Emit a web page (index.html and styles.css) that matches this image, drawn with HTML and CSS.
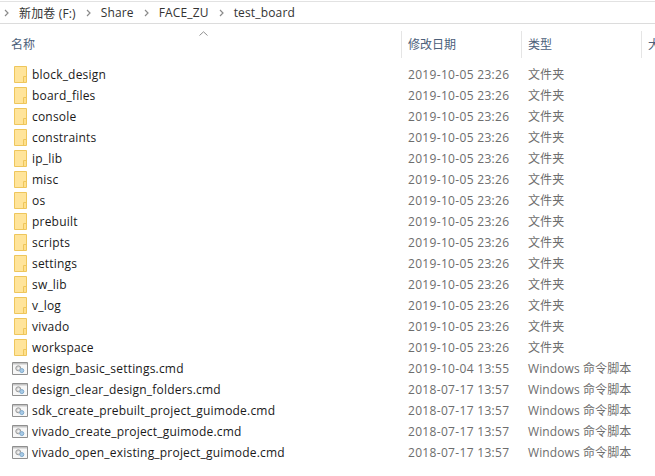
FILE: index.html
```html
<!DOCTYPE html>
<html lang="zh">
<head>
<meta charset="utf-8">
<title>test_board</title>
<link rel="stylesheet" href="styles.css">
</head>
<body>
<svg class="defs" width="0" height="0" aria-hidden="true">
  <symbol id="folder" viewBox="0 0 13 17">
    <path d="M.5.5H12.5V16.5H.5Z" fill="#ffe08c" stroke="#eec65c"/>
    <path d="M1 1H12V10H10V16H1Z" fill="#ffe49a"/>
    <path d="M9.5 16V10.5H12.5" fill="none" stroke="#eec65c"/>
  </symbol>
  <symbol id="script" viewBox="0 0 16 13">
    <path d="M.5.5H15.5V12.5H.5Z" fill="#f7f7f7" stroke="#8f8f8f"/>
    <path d="M1 1H15V2.5H1Z" fill="#c4c4c4"/>
    <circle cx="6.3" cy="6.3" r="2.5" fill="#d8d8d8" stroke="#9a9a9a"/>
    <circle cx="6.3" cy="6.3" r=".8" fill="#fff"/>
    <circle cx="9.8" cy="8.6" r="2" fill="#a9cbe6" stroke="#7fa9cc"/>
  </symbol>
</svg>
<nav class="crumbs">
  <svg class="chev first" viewBox="0 0 5 8"><path d="M1 1L4 4L1 7"/></svg>
  <span>新加卷 (F:)</span>
  <svg class="chev" viewBox="0 0 5 8"><path d="M1 1L4 4L1 7"/></svg>
  <span>Share</span>
  <svg class="chev" viewBox="0 0 5 8"><path d="M1 1L4 4L1 7"/></svg>
  <span>FACE_ZU</span>
  <svg class="chev" viewBox="0 0 5 8"><path d="M1 1L4 4L1 7"/></svg>
  <span>test_board</span>
</nav>
<header class="head">
  <div class="hcol hname">名称
    <svg class="sort" viewBox="0 0 9 5"><path d="M.5 4.5L4.5 .8L8.5 4.5"/></svg>
  </div>
  <div class="hcol hdate">修改日期</div>
  <div class="hcol htype">类型</div>
  <div class="hcol hsize">大小</div>
</header>
<main class="list">
  <div class="row"><svg class="ico"><use href="#folder"/></svg><span class="name">block_design</span><span class="date">2019-10-05 23:26</span><span class="type">文件夹</span></div>
  <div class="row"><svg class="ico"><use href="#folder"/></svg><span class="name">board_files</span><span class="date">2019-10-05 23:26</span><span class="type">文件夹</span></div>
  <div class="row"><svg class="ico"><use href="#folder"/></svg><span class="name">console</span><span class="date">2019-10-05 23:26</span><span class="type">文件夹</span></div>
  <div class="row"><svg class="ico"><use href="#folder"/></svg><span class="name">constraints</span><span class="date">2019-10-05 23:26</span><span class="type">文件夹</span></div>
  <div class="row"><svg class="ico"><use href="#folder"/></svg><span class="name">ip_lib</span><span class="date">2019-10-05 23:26</span><span class="type">文件夹</span></div>
  <div class="row"><svg class="ico"><use href="#folder"/></svg><span class="name">misc</span><span class="date">2019-10-05 23:26</span><span class="type">文件夹</span></div>
  <div class="row"><svg class="ico"><use href="#folder"/></svg><span class="name">os</span><span class="date">2019-10-05 23:26</span><span class="type">文件夹</span></div>
  <div class="row"><svg class="ico"><use href="#folder"/></svg><span class="name">prebuilt</span><span class="date">2019-10-05 23:26</span><span class="type">文件夹</span></div>
  <div class="row"><svg class="ico"><use href="#folder"/></svg><span class="name">scripts</span><span class="date">2019-10-05 23:26</span><span class="type">文件夹</span></div>
  <div class="row"><svg class="ico"><use href="#folder"/></svg><span class="name">settings</span><span class="date">2019-10-05 23:26</span><span class="type">文件夹</span></div>
  <div class="row"><svg class="ico"><use href="#folder"/></svg><span class="name">sw_lib</span><span class="date">2019-10-05 23:26</span><span class="type">文件夹</span></div>
  <div class="row"><svg class="ico"><use href="#folder"/></svg><span class="name">v_log</span><span class="date">2019-10-05 23:26</span><span class="type">文件夹</span></div>
  <div class="row"><svg class="ico"><use href="#folder"/></svg><span class="name">vivado</span><span class="date">2019-10-05 23:26</span><span class="type">文件夹</span></div>
  <div class="row"><svg class="ico"><use href="#folder"/></svg><span class="name">workspace</span><span class="date">2019-10-05 23:26</span><span class="type">文件夹</span></div>
  <div class="row"><svg class="ico file"><use href="#script"/></svg><span class="name">design_basic_settings.cmd</span><span class="date">2019-10-04 13:55</span><span class="type">Windows 命令脚本</span></div>
  <div class="row"><svg class="ico file"><use href="#script"/></svg><span class="name">design_clear_design_folders.cmd</span><span class="date">2018-07-17 13:57</span><span class="type">Windows 命令脚本</span></div>
  <div class="row"><svg class="ico file"><use href="#script"/></svg><span class="name">sdk_create_prebuilt_project_guimode.cmd</span><span class="date">2018-07-17 13:57</span><span class="type">Windows 命令脚本</span></div>
  <div class="row"><svg class="ico file"><use href="#script"/></svg><span class="name">vivado_create_project_guimode.cmd</span><span class="date">2018-07-17 13:57</span><span class="type">Windows 命令脚本</span></div>
  <div class="row"><svg class="ico file"><use href="#script"/></svg><span class="name">vivado_open_existing_project_guimode.cmd</span><span class="date">2018-07-17 13:57</span><span class="type">Windows 命令脚本</span></div>
</main>
</body>
</html>
```
FILE: styles.css
```css
html, body {
  margin: 0;
  padding: 0;
  background: #fff;
  overflow: hidden;
}
body {
  width: 655px;
  height: 476px;
  font-family: "Open Sans", "Noto Sans CJK SC", sans-serif;
  font-size: 12px;
  color: #1a1a1a;
}
.defs {
  position: absolute;
}
.crumbs {
  box-sizing: border-box;
  height: 23px;
  margin-top: 1px;
  border-top: 1px solid #e2e2e2;
  border-bottom: 1px solid #dcdcdc;
  display: flex;
  align-items: center;
  padding-left: 4px;
  color: #333;
  letter-spacing: .15px;
}
.chev {
  width: 5px;
  height: 8px;
  margin: 0 10px 0 0;
  flex: none;
}
.chev path {
  fill: none;
  stroke: #8a8a8a;
  stroke-width: 1.2;
}
.chev.first {
  margin-right: 10px;
}
.crumbs span {
  margin-right: 10px;
}
.head {
  display: flex;
  height: 27px;
  margin-top: 7px;
  color: #4c607a;
}
.hcol {
  box-sizing: border-box;
  padding-left: 6px;
  line-height: 27px;
  border-left: 1px solid #e5e5e5;
  flex: none;
  overflow: hidden;
  white-space: nowrap;
}
.hname {
  width: 401px;
  border-left: 0;
  padding-left: 11px;
  position: relative;
}
.hdate, .htype {
  width: 120px;
}
.hsize {
  width: 14px;
}
.sort {
  position: absolute;
  left: 199px;
  top: 0;
  width: 9px;
  height: 5px;
}
.sort path {
  fill: none;
  stroke: #8f8f8f;
}
.list {
  margin-top: 6px;
}
.row {
  display: flex;
  align-items: center;
  height: 21px;
  line-height: 21px;
  white-space: nowrap;
}
.ico {
  width: 13px;
  height: 17px;
  margin-left: 14px;
  margin-right: 5px;
  flex: none;
}
.ico.file {
  width: 16px;
  height: 13px;
  margin-left: 12px;
  margin-right: 4px;
}
.name {
  width: 376px;
  flex: none;
  letter-spacing: .2px;
}
.date {
  width: 120px;
  flex: none;
  color: #6d6d6d;
  letter-spacing: .32px;
}
.type {
  color: #6d6d6d;
  letter-spacing: .1px;
}
```
